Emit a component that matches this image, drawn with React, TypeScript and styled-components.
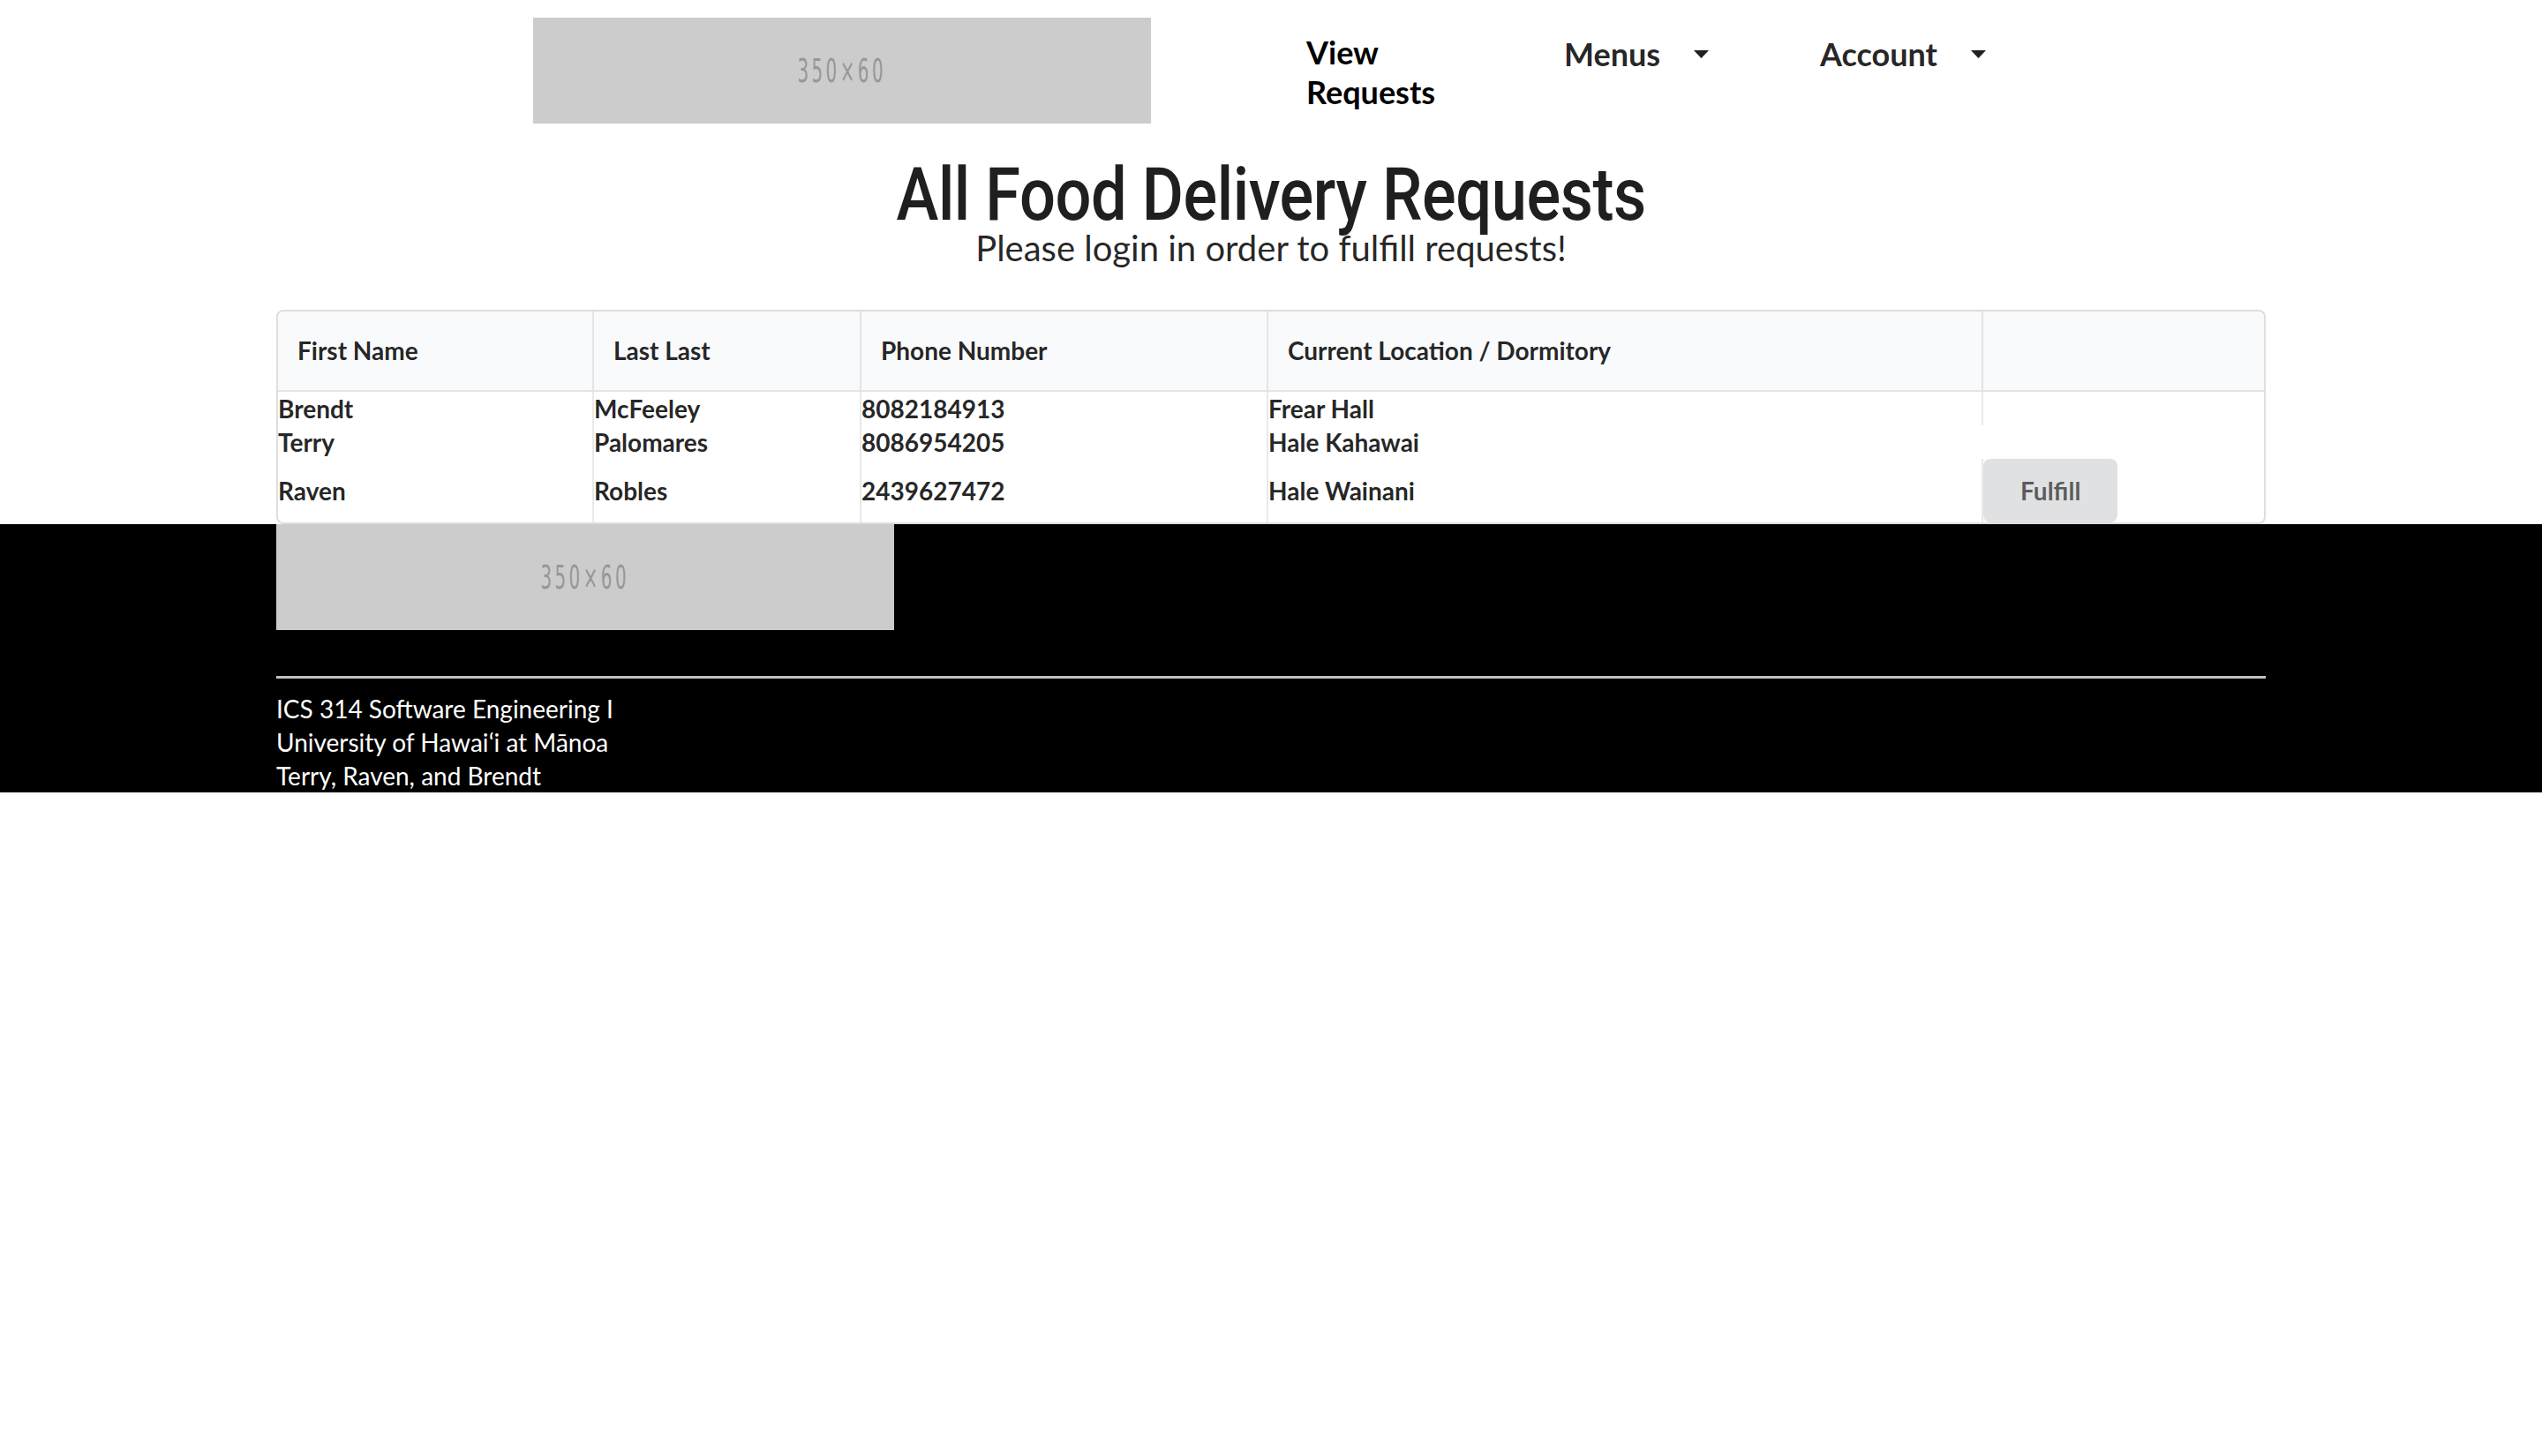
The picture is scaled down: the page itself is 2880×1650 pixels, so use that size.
import React from "react";
import styled, { createGlobalStyle } from "styled-components";

const GlobalStyle = createGlobalStyle`
  html, body {
    margin: 0;
    padding: 0;
    background: #ffffff;
  }
  body {
    font-family: Lato, "Open Sans", "Helvetica Neue", Arial, sans-serif;
    font-size: 28px;
    color: rgba(0, 0, 0, 0.87);
  }
  * { box-sizing: border-box; }
`;

const Page = styled.div`
  display: flex;
  flex-direction: column;
  width: 100%;
`;

/* ---------- Navigation ---------- */

const Nav = styled.header`
  display: flex;
  justify-content: center;
  padding-top: 20px;
`;

const NavInner = styled.div`
  display: flex;
  align-items: flex-start;
  width: 1672px;
`;

const Placeholder = styled.div`
  flex: none;
  display: flex;
  align-items: center;
  justify-content: center;
  width: 700px;
  height: 120px;
  background: #cccccc;
`;

const PlaceholderText = styled.span`
  display: inline-block;
  color: #979797;
  font-family: "DejaVu Sans Condensed", "DejaVu Sans", sans-serif;
  font-stretch: condensed;
  font-size: 38px;
  line-height: 38px;
  letter-spacing: 6px;
  font-weight: 400;
  transform: scaleX(0.58);
  white-space: nowrap;
`;

const NavItems = styled.nav`
  display: grid;
  grid-template-columns: 292px 290px auto;
  align-items: start;
  margin-left: 176px;
`;

const NavLink = styled.a<{ $strong?: boolean }>`
  display: block;
  max-width: 200px;
  margin-top: 17px;
  font-size: 36px;
  line-height: 45px;
  font-weight: 700;
  color: ${(p) => (p.$strong ? "#000000" : "rgba(0, 0, 0, 0.87)")};
  text-decoration: none;
  cursor: pointer;
`;

const DropdownItem = styled.div`
  display: flex;
  align-items: center;
  margin-top: 19px;
  font-size: 36px;
  line-height: 45px;
  font-weight: 700;
  color: rgba(0, 0, 0, 0.87);
  cursor: pointer;
  white-space: nowrap;
`;

const CaretIcon = styled.svg`
  width: 17px;
  height: 9px;
  margin-left: 38px;
  fill: rgba(0, 0, 0, 0.87);
`;

const Caret = () => (
  <CaretIcon viewBox="0 0 17 9" aria-hidden="true">
    <polygon points="0,0 17,0 8.5,9" />
  </CaretIcon>
);

/* ---------- Main ---------- */

const Main = styled.main`
  display: flex;
  flex-direction: column;
  align-items: center;
`;

const TitleBlock = styled.div`
  display: flex;
  flex-direction: column;
  align-items: center;
  margin-top: 44px;
`;

const Title = styled.h1`
  margin: 0;
  display: inline-block;
  font-family: Roboto, "Open Sans", sans-serif;
  font-weight: 500;
  font-size: 83px;
  line-height: 74px;
  letter-spacing: -0.5px;
  color: #1f1f1f;
  transform: scaleX(0.87);
  white-space: nowrap;
`;

const Subtitle = styled.div`
  margin-top: 3px;
  font-family: Lato, sans-serif;
  font-weight: 400;
  font-size: 40px;
  line-height: 40px;
  color: rgba(0, 0, 0, 0.87);
`;

const Table = styled.table`
  width: 2254px;
  margin-top: 50px;
  border: 2px solid rgba(34, 36, 38, 0.15);
  border-radius: 8px;
  border-collapse: separate;
  border-spacing: 0;
  font-size: 28px;
  color: rgba(0, 0, 0, 0.87);
  text-align: left;
`;

const Th = styled.th<{ $w: number; $first?: boolean }>`
  width: ${(p) => p.$w}px;
  padding: 25px 22px 26px;
  line-height: 38px;
  font-weight: 700;
  background: #f9fafb;
  border-bottom: 2px solid rgba(34, 36, 38, 0.1);
  border-left: ${(p) => (p.$first ? "none" : "2px solid rgba(34, 36, 38, 0.1)")};
  vertical-align: middle;
  &:first-child { border-top-left-radius: 8px; }
  &:last-child { border-top-right-radius: 8px; }
`;

const Td = styled.td<{ $first?: boolean }>`
  padding: 0;
  line-height: 38px;
  font-weight: 700;
  border-left: ${(p) => (p.$first ? "none" : "2px solid rgba(34, 36, 38, 0.1)")};
  vertical-align: middle;
`;

const Button = styled.button`
  display: block;
  margin: 0;
  padding: 22px 42px;
  border: none;
  border-radius: 8px;
  background: #e0e1e2;
  color: rgba(0, 0, 0, 0.6);
  font-family: Lato, sans-serif;
  font-size: 28px;
  line-height: 28px;
  font-weight: 700;
  cursor: pointer;
`;

/* ---------- Footer ---------- */

const Footer = styled.footer`
  background: #000000;
  display: flex;
  justify-content: center;
`;

const FooterInner = styled.div`
  width: 2254px;
  display: flex;
  flex-direction: column;
  align-items: flex-start;
`;

const Divider = styled.hr`
  width: 100%;
  height: 0;
  margin: 52px 0 15px;
  border: none;
  border-top: 3px solid #c2c2c2;
`;

const FooterText = styled.div`
  color: #ffffff;
  font-size: 28px;
  line-height: 38px;
  font-weight: 400;
`;

type Row = { first: string; last: string; phone: string; location: string; cell: "empty" | "none" | "button" };

const rows: Row[] = [
  { first: "Brendt", last: "McFeeley", phone: "8082184913", location: "Frear Hall", cell: "empty" },
  { first: "Terry", last: "Palomares", phone: "8086954205", location: "Hale Kahawai", cell: "none" },
  { first: "Raven", last: "Robles", phone: "2439627472", location: "Hale Wainani", cell: "button" },
];

export default function App() {
  return (
    <Page>
      <GlobalStyle />
      <Nav>
        <NavInner>
          <Placeholder>
            <PlaceholderText>350×60</PlaceholderText>
          </Placeholder>
          <NavItems>
            <NavLink $strong>View Requests</NavLink>
            <DropdownItem>
              Menus
              <Caret />
            </DropdownItem>
            <DropdownItem>
              Account
              <Caret />
            </DropdownItem>
          </NavItems>
        </NavInner>
      </Nav>

      <Main>
        <TitleBlock>
          <Title>All Food Delivery Requests</Title>
          <Subtitle>Please login in order to fulfill requests!</Subtitle>
        </TitleBlock>

        <Table>
          <thead>
            <tr>
              <Th $w={356} $first>First Name</Th>
              <Th $w={303}>Last Last</Th>
              <Th $w={461}>Phone Number</Th>
              <Th $w={810}>Current Location / Dormitory</Th>
              <Th $w={320}></Th>
            </tr>
          </thead>
          <tbody>
            {rows.map((r) => (
              <tr key={r.phone}>
                <Td $first>{r.first}</Td>
                <Td>{r.last}</Td>
                <Td>{r.phone}</Td>
                <Td>{r.location}</Td>
                {r.cell === "empty" && <Td></Td>}
                {r.cell === "button" && (
                  <Td>
                    <Button>Fulfill</Button>
                  </Td>
                )}
              </tr>
            ))}
          </tbody>
        </Table>
      </Main>

      <Footer>
        <FooterInner>
          <Placeholder>
            <PlaceholderText>350×60</PlaceholderText>
          </Placeholder>
          <Divider />
          <FooterText>
            ICS 314 Software Engineering I
            <br />
            University of Hawaiʻi at Mānoa
            <br />
            Terry, Raven, and Brendt
          </FooterText>
        </FooterInner>
      </Footer>
    </Page>
  );
}
